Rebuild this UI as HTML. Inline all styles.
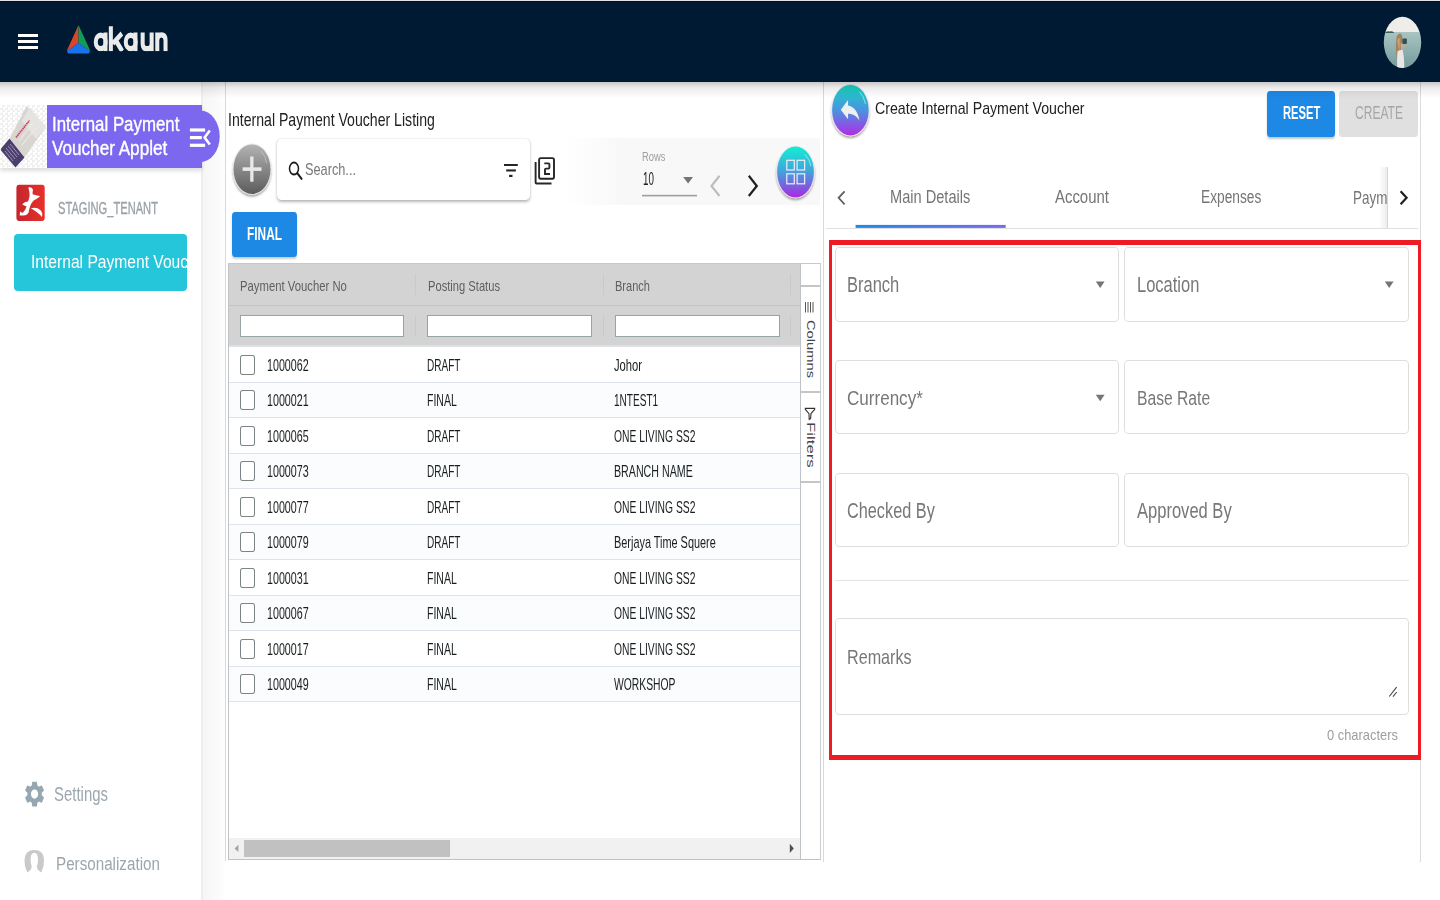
<!DOCTYPE html>
<html><head><meta charset="utf-8">
<style>
html,body{margin:0;padding:0;width:1440px;height:900px;overflow:hidden;background:#fff;}
body{position:relative;font-family:"Liberation Sans",sans-serif;}
.a{position:absolute;box-sizing:border-box;}
.t{position:absolute;white-space:nowrap;line-height:1;transform-origin:0 0;font-family:"Liberation Sans",sans-serif;}
svg{position:absolute;overflow:visible;}
</style></head><body>
<!-- ============ NAVBAR ============ -->
<div class="a" style="left:0;top:0;width:1440px;height:1px;background:#e3e2de"></div>
<div class="a" style="left:0;top:1px;width:1440px;height:81px;background:#001a33"></div>
<div class="a" style="left:0;top:1px;width:1440px;height:1px;background:#000d24"></div>
<!-- hamburger -->
<div class="a" style="left:18.4px;top:34px;width:19.4px;height:3px;background:#fff"></div>
<div class="a" style="left:18.4px;top:40px;width:19.4px;height:3px;background:#fff"></div>
<div class="a" style="left:18.4px;top:46.2px;width:19.4px;height:3px;background:#fff"></div>
<svg style="left:0;top:0" width="1440" height="82" viewBox="0 0 1440 82">
  <path d="M78.5 25 L67 50.2 Q66.6 51.2 67.6 50.7 L78.5 43 Z" fill="#d8452b"/>
  <path d="M78.5 25 L90 50.2 Q90.4 51.2 89.4 50.7 L78.5 43 Z" fill="#0f9d58"/>
  <path d="M78.5 43 L67.4 50.8 Q66.8 53.4 69 53.5 L88 53.5 Q90.2 53.4 89.6 50.8 Z" fill="#1a73e8"/>
  <clipPath id="lgc"><rect x="90" y="20" width="80" height="31.3"/></clipPath><g clip-path="url(#lgc)"><g transform="translate(93.75 0) scale(0.75 1)" fill="none" stroke="#ebebeb" stroke-width="5.4">
    <ellipse cx="9.3" cy="41.9" rx="6.6" ry="6.7"/>
    <path d="M15.6 32.5 V51.25"/>
    <path d="M22.8 26.25 V51.25 M37.5 33.5 L25.5 43.5 M29.5 40.5 L38 51.25"/>
    <ellipse cx="49.3" cy="41.9" rx="6.6" ry="6.7"/>
    <path d="M55.6 32.5 V51.25"/>
    <path d="M65.2 32.5 V43.5 Q65.2 48.8 71.2 48.8 Q77.2 48.8 77.2 43.5 V32.5 M77.2 42 V51.25"/>
    <path d="M84.7 51.25 V40.2 Q84.7 34.9 90.2 34.9 Q95.7 34.9 95.7 40.2 V51.25 M84.7 41 V32.5"/>
  </g></g>
  <defs><clipPath id="avc"><ellipse cx="1402.5" cy="42.4" rx="18.7" ry="25.6"/></clipPath>
  <linearGradient id="sea" x1="0" y1="0" x2="0" y2="1"><stop offset="0" stop-color="#a9c4c3"/><stop offset="1" stop-color="#6f9796"/></linearGradient></defs>
  <g clip-path="url(#avc)">
    <rect x="1380" y="14" width="45" height="18.5" fill="#eeede9"/>
    <rect x="1380" y="32" width="45" height="40" fill="url(#sea)"/>
    <path d="M1384 33 Q1387 30.5 1390 31.5 Q1392 30.8 1394 32.5 L1394 33 Z" fill="#3d5a55"/>
    <path d="M1396.5 58 Q1395.3 46 1396.5 37.5 Q1398 33 1400.5 33.5 Q1402.5 34.5 1402.3 39 Q1401.5 48 1400.5 58 Z" fill="#a3825f"/>
    <path d="M1397.2 41 Q1398.5 36 1399.8 39 L1399.5 52 Z" fill="#c7a27a"/>
    <path d="M1397.5 51 L1402.5 49.5 Q1404.5 58 1404.3 70 L1397.3 70 Q1396.8 60 1397.5 51 Z" fill="#e9e7e3"/>
    <path d="M1400.5 44 L1404 41 L1404.5 47 L1401 50 Z" fill="#c9a88c"/>
    <rect x="1402.3" y="38.5" width="4.6" height="5.5" rx="1" fill="#37504f"/>
  </g>
</svg>

<!-- ============ SIDEBAR ============ -->
<div class="a" style="left:201px;top:82px;width:2px;height:818px;background:#eeeeee"></div>
<div class="a" style="left:203px;top:82px;width:22px;height:818px;background:linear-gradient(90deg,#f6f6f6,#fafafa 60%,#fefefe)"></div>
<!-- applet header -->
<div class="a" style="left:0;top:105px;width:202px;height:63px;box-shadow:0 3px 4px rgba(0,0,0,0.13)"></div>
<div class="a" style="left:0;top:105px;width:47px;height:63px;background:conic-gradient(#f0f0f0 25%,#fff 0 50%,#f0f0f0 0 75%,#fff 0) 0 0/5px 5px"></div>
<svg style="left:0;top:0" width="230" height="175" viewBox="0 0 230 175">
  <path d="M26.5 106 L46 126.5 L24.5 157.5 L9.5 138.5 Z" fill="#d9d6d2"/>
  <path d="M29.5 107.5 L46 126.5 L36 139 L22 121 Z" fill="#e6e4e1"/>
  <path d="M9.5 138.5 L24.5 157.5 L15.5 167.5 L1 150.5 Q0.5 149 1.5 148 Z" fill="#4b3d6e"/>
  <path d="M6 148 L15 159 M8 146 L17 157 M10 144 L19 155 M5 151 L13 161" stroke="#a59fb8" stroke-width="0.9"/>
  <path d="M16 137.5 L29.5 120.5" stroke="#c9435f" stroke-width="1.7" stroke-dasharray="1.6 0.5"/>
  <path d="M19 141 L33 123 M22 145 L36 128" stroke="#f1f0ee" stroke-width="1"/>
  <rect x="47" y="105" width="155" height="63" fill="#7b68ee"/>
  <ellipse cx="200.5" cy="136.3" rx="19.2" ry="25.7" fill="#7b68ee"/>
  <rect x="189.9" y="128.4" width="15.2" height="3.2" fill="#fff"/>
  <rect x="189.9" y="136" width="11.9" height="3.2" fill="#fff"/>
  <rect x="189.9" y="143.7" width="15.2" height="3.2" fill="#fff"/>
  <path d="M209.8 130.4 L204.6 137.5 L209.8 144.6" fill="none" stroke="#fff" stroke-width="2.6"/>
</svg>
<!-- tenant logo -->
<svg style="left:0;top:0" width="60" height="230" viewBox="0 0 60 230">
  <defs><linearGradient id="tg" x1="0" y1="0" x2="1" y2="0"><stop offset="0" stop-color="#c4262e"/><stop offset="1" stop-color="#e8302a"/></linearGradient></defs>
  <rect x="16.4" y="184.8" width="28.3" height="36.2" rx="2.6" ry="3.4" fill="url(#tg)"/>
  <path d="M28.4 187.5 Q31.5 186.8 33 189.5 Q32.5 192 32.6 194.2 Q36 195 40.2 196.3 Q37 199 34 200.3 Q31.5 202.5 30.2 206 Q28.8 210.5 28.6 212.5 Q27 215.5 23.5 215.5 L19.8 215.4 Q19.5 212.5 20.6 211.3 Q21.3 213.2 22.8 212.8 Q25.5 210 26.6 206.5 Q24.2 205.8 22.2 204.3 Q24.5 201.8 28 201.6 Q29.2 199 29.6 195.5 Q29.8 192.5 28.4 187.5 Z" fill="#fff"/>
  <path d="M30.8 208.3 Q36.8 206.8 40.5 210.3 Q43.2 213.5 41.8 216.9 Q38 212.2 30.8 208.3 Z" fill="#fff"/>
</svg>
<!-- cyan applet button -->
<div class="a" style="left:14px;top:234px;width:173px;height:57px;background:#26c6da;border-radius:4px"></div>
<!-- settings gear -->
<svg style="left:0;top:0" width="60" height="900" viewBox="0 0 60 900">
  <g transform="translate(22.5 778.6) scale(1.005 1.29)">
    <path d="M19.14 12.94c.04-.3.06-.61.06-.94 0-.32-.02-.64-.07-.94l2.03-1.58c.18-.14.23-.41.12-.61l-1.92-3.32c-.12-.22-.37-.29-.59-.22l-2.39.96c-.5-.38-1.03-.7-1.62-.94l-.36-2.54c-.04-.24-.24-.41-.48-.41h-3.84c-.24 0-.43.17-.47.41l-.36 2.54c-.59.24-1.130.57-1.62.94l-2.39-.96c-.22-.08-.47 0-.59.22L2.74 8.87c-.12.21-.08.47.12.61l2.03 1.580c-.05.3-.09.63-.09.94s.02.64.07.94l-2.03 1.58c-.18.14-.23.41-.12.61l1.92 3.32c.12.22.37.29.59.22l2.39-.96c.5.38 1.03.7 1.62.94l.36 2.54c.05.24.24.41.48.41h3.84c.24 0 .44-.17.47-.41l.36-2.54c.59-.24 1.13-.56 1.62-.94l2.39.96c.22.08.47 0 .59-.22l1.92-3.32c.12-.22.07-.47-.12-.61l-2.01-1.58zM12 15.6c-1.98 0-3.6-1.62-3.6-3.6s1.62-3.6 3.6-3.6 3.6 1.62 3.6 3.6-1.62 3.6-3.6 3.6z" fill="#95a7b1"/>
  </g>
  <path d="M27.4 872.6 Q24.1 866 24.6 859 Q25.3 849.9 34.3 849.9 Q43.3 849.9 44 859 Q44.4 866 41.3 872.6 Q36.6 869.5 36.9 866.3 Q38.2 863 38 859 Q37.7 852.8 34.3 852.8 Q30.9 852.8 30.6 859 Q30.4 863 31.7 866.3 Q32 869.5 27.4 872.6 Z" fill="#c9c9c9"/>
</svg>

<!-- ============ LISTING PANEL ============ -->
<div class="a" style="left:225px;top:82px;width:1px;height:779px;background:#d9d9d9"></div>
<!-- plus FAB -->
<svg style="left:0;top:0" width="830" height="260" viewBox="0 0 830 260">
  <defs>
    <linearGradient id="pg" x1="0" y1="0" x2="0" y2="1"><stop offset="0" stop-color="#b3b3b3"/><stop offset="0.45" stop-color="#8c8c8c"/><stop offset="1" stop-color="#5c5c5c"/></linearGradient>
    <linearGradient id="fg" x1="0" y1="0" x2="0" y2="1"><stop offset="0" stop-color="#0ff0d2"/><stop offset="0.5" stop-color="#45a0dc"/><stop offset="1" stop-color="#aa28e4"/></linearGradient>
    <filter id="sh" x="-30%" y="-30%" width="160%" height="160%"><feGaussianBlur in="SourceAlpha" stdDeviation="1.3"/><feOffset dy="1.5"/><feComponentTransfer><feFuncA type="linear" slope="0.35"/></feComponentTransfer><feMerge><feMergeNode/><feMergeNode in="SourceGraphic"/></feMerge></filter>
  </defs>
  <ellipse cx="252" cy="169.2" rx="19.3" ry="25.6" fill="#ebe6ee" filter="url(#sh)"/><ellipse cx="252" cy="169.2" rx="18.5" ry="24.8" fill="url(#pg)"/>
  <path d="M261 151 Q266 156 266.5 163" stroke="#d0d0d0" stroke-width="0.8" fill="none" opacity="0.8"/>
  <rect x="242.6" y="167.3" width="18.9" height="3.6" fill="#e8e8e8"/>
  <rect x="250.2" y="156.5" width="3.3" height="25.2" fill="#e8e8e8"/>
</svg>
<!-- search box -->
<div class="a" style="left:277px;top:139px;width:253px;height:61px;background:#fff;border-radius:4px/5px;box-shadow:0 1.5px 3px rgba(0,0,0,0.28),0 0 1px rgba(0,0,0,0.12)"></div>
<svg style="left:0;top:0" width="830" height="260" viewBox="0 0 830 260">
  <g transform="translate(288 161.2) scale(0.75 1)">
    <circle cx="8" cy="7.4" r="6" fill="none" stroke="#1b1b1b" stroke-width="2"/>
    <path d="M12.3 12 L18.2 17.6" stroke="#1b1b1b" stroke-width="2.3" stroke-linecap="round"/>
  </g>
  <rect x="504" y="164" width="13.8" height="2" fill="#262626"/>
  <rect x="506.2" y="169.4" width="9.7" height="2.1" fill="#262626"/>
  <rect x="509.1" y="174.8" width="3.4" height="2.2" fill="#262626"/>
  <!-- filter_2 -->
  <rect x="539.1" y="158.1" width="14.9" height="20.6" rx="1.6" ry="2" fill="none" stroke="#262626" stroke-width="1.9"/>
  <path d="M535.6 162 L535.6 182.4 Q535.6 183.5 536.6 183.5 L551.5 183.5" fill="none" stroke="#262626" stroke-width="1.9"/>
  <path d="M544.3 163.4 H548.4 Q549.4 163.4 549.4 164.4 V167.6 Q549.4 168.6 548.4 168.6 H546 Q545 168.6 545 169.6 V174 H550" fill="none" stroke="#262626" stroke-width="1.9"/>
</svg>
<!-- paginator bg -->
<div class="a" style="left:566px;top:138px;width:254px;height:67px;background:linear-gradient(90deg,rgba(248,248,248,0),#f8f8f8 22%,#f8f8f8)"></div>
<svg style="left:0;top:0" width="830" height="260" viewBox="0 0 830 260">
  <rect x="642" y="194.8" width="55" height="1.6" fill="#9e9e9e"/>
  <path d="M683.2 177 L693 177 L688.1 183.4 Z" fill="#757575"/>
  <path d="M719.5 175.8 L711.5 186 L719.5 196" fill="none" stroke="#bdbdbd" stroke-width="2.2"/>
  <path d="M748.8 175.8 L756.8 186 L748.8 196" fill="none" stroke="#1f1f1f" stroke-width="2.2"/>
  <!-- grid FAB -->
  <ellipse cx="795.5" cy="172" rx="19.2" ry="26.2" fill="#ebe6ee" filter="url(#sh)"/><ellipse cx="795.5" cy="172" rx="18.4" ry="25.4" fill="url(#fg)"/>
  <path d="M804.7 154.5 Q809.5 158.5 811 166" stroke="#8ff0f0" stroke-width="1" fill="none" opacity="0.9"/>
  <g fill="none" stroke="#eceaf4" stroke-width="1.25">
    <rect x="786.8" y="160.3" width="7.5" height="9.7"/>
    <rect x="797.1" y="160.3" width="7.5" height="9.7"/>
    <rect x="786.8" y="173.8" width="7.5" height="10"/>
    <rect x="797.1" y="173.8" width="7.5" height="10"/>
  </g>
</svg>
<!-- FINAL button -->
<div class="a" style="left:232px;top:211.8px;width:65px;height:45.2px;background:#1e88e5;border-radius:3px/4px;box-shadow:0 2px 2px rgba(0,0,0,0.2)"></div>
<div class="a" style="left:228px;top:263px;width:572px;height:82px;background:#d3d3d3"></div>
<div class="a" style="left:228px;top:304.5px;width:572px;height:1px;background:#bfc5ca"></div>
<div class="a" style="left:228px;top:345px;width:572px;height:2px;background:#dfe2e5"></div>
<div class="a" style="left:415px;top:274px;width:1px;height:21px;background:#c9c9c9"></div>
<div class="a" style="left:415px;top:316px;width:1px;height:21px;background:#c9c9c9"></div>
<div class="a" style="left:603px;top:274px;width:1px;height:21px;background:#c9c9c9"></div>
<div class="a" style="left:603px;top:316px;width:1px;height:21px;background:#c9c9c9"></div>
<div class="a" style="left:790px;top:274px;width:1px;height:21px;background:#c9c9c9"></div>
<div class="a" style="left:790px;top:316px;width:1px;height:21px;background:#c9c9c9"></div>
<div class="a" style="left:240.3px;top:315.4px;width:164.2px;height:21.3px;background:#fff;border:1px solid #95a5a6"></div>
<div class="a" style="left:427px;top:315.4px;width:165.0px;height:21.3px;background:#fff;border:1px solid #95a5a6"></div>
<div class="a" style="left:615px;top:315.4px;width:164.7px;height:21.3px;background:#fff;border:1px solid #95a5a6"></div>
<div class="a" style="left:228px;top:347.0px;width:572px;height:35.5px;background:#fff;border-bottom:1px solid #dde2eb"></div>
<div class="a" style="left:240px;top:354.6px;width:15px;height:20px;background:#fff;border:1.3px solid #7d8486;border-radius:2.5px/3px"></div>
<div class="a" style="left:228px;top:382.5px;width:572px;height:35.5px;background:#fbfcfe;border-bottom:1px solid #dde2eb"></div>
<div class="a" style="left:240px;top:390.1px;width:15px;height:20px;background:#fff;border:1.3px solid #7d8486;border-radius:2.5px/3px"></div>
<div class="a" style="left:228px;top:418.0px;width:572px;height:35.5px;background:#fff;border-bottom:1px solid #dde2eb"></div>
<div class="a" style="left:240px;top:425.6px;width:15px;height:20px;background:#fff;border:1.3px solid #7d8486;border-radius:2.5px/3px"></div>
<div class="a" style="left:228px;top:453.5px;width:572px;height:35.5px;background:#fbfcfe;border-bottom:1px solid #dde2eb"></div>
<div class="a" style="left:240px;top:461.1px;width:15px;height:20px;background:#fff;border:1.3px solid #7d8486;border-radius:2.5px/3px"></div>
<div class="a" style="left:228px;top:489.0px;width:572px;height:35.5px;background:#fff;border-bottom:1px solid #dde2eb"></div>
<div class="a" style="left:240px;top:496.6px;width:15px;height:20px;background:#fff;border:1.3px solid #7d8486;border-radius:2.5px/3px"></div>
<div class="a" style="left:228px;top:524.5px;width:572px;height:35.5px;background:#fbfcfe;border-bottom:1px solid #dde2eb"></div>
<div class="a" style="left:240px;top:532.1px;width:15px;height:20px;background:#fff;border:1.3px solid #7d8486;border-radius:2.5px/3px"></div>
<div class="a" style="left:228px;top:560.0px;width:572px;height:35.5px;background:#fff;border-bottom:1px solid #dde2eb"></div>
<div class="a" style="left:240px;top:567.6px;width:15px;height:20px;background:#fff;border:1.3px solid #7d8486;border-radius:2.5px/3px"></div>
<div class="a" style="left:228px;top:595.5px;width:572px;height:35.5px;background:#fbfcfe;border-bottom:1px solid #dde2eb"></div>
<div class="a" style="left:240px;top:603.1px;width:15px;height:20px;background:#fff;border:1.3px solid #7d8486;border-radius:2.5px/3px"></div>
<div class="a" style="left:228px;top:631.0px;width:572px;height:35.5px;background:#fff;border-bottom:1px solid #dde2eb"></div>
<div class="a" style="left:240px;top:638.6px;width:15px;height:20px;background:#fff;border:1.3px solid #7d8486;border-radius:2.5px/3px"></div>
<div class="a" style="left:228px;top:666.5px;width:572px;height:35.5px;background:#fbfcfe;border-bottom:1px solid #dde2eb"></div>
<div class="a" style="left:240px;top:674.1px;width:15px;height:20px;background:#fff;border:1.3px solid #7d8486;border-radius:2.5px/3px"></div>
<div class="a" style="left:228px;top:263px;width:1px;height:597px;background:#bdc3c7"></div>
<div class="a" style="left:799.5px;top:263px;width:1px;height:597px;background:#bdc3c7"></div>
<div class="a" style="left:228px;top:859px;width:593px;height:1px;background:#bdc3c7"></div>
<div class="a" style="left:228px;top:263px;width:592px;height:1px;background:#c8c8c8"></div>
<div class="a" style="left:820px;top:263px;width:1px;height:597px;background:#c8cdd1"></div>
<div class="a" style="left:229px;top:838px;width:571px;height:21px;background:#f1f1f1"></div>
<div class="a" style="left:244px;top:840px;width:206px;height:17px;background:#c1c1c1"></div>
<svg style="left:0;top:0" width="830" height="900" viewBox="0 0 830 900"><path d="M238.4 844.8 L234.6 848.4 L238.4 852 Z" fill="#a3a3a3"/><path d="M789.8 843.8 L793.8 848.4 L789.8 853 Z" fill="#505050"/></svg>
<div class="a" style="left:801px;top:285px;width:19px;height:1.5px;background:#c5c5c5"></div>
<div class="a" style="left:801px;top:391px;width:19px;height:1.5px;background:#c5c5c5"></div>
<div class="a" style="left:801px;top:481px;width:19px;height:1.5px;background:#c5c5c5"></div>
<svg style="left:0;top:0" width="830" height="900" viewBox="0 0 830 900"><g stroke="#555" stroke-width="1"><path d="M805.5 302 V312.5 M808 302 V312.5 M810.5 302 V312.5 M813 302 V312.5"/></g><path d="M805.3 408.4 L814.7 408.4 Q815 409.3 814.2 410 L811 413.6 L810.6 418.6 L809.2 419.3 L809 413.6 L805.8 410 Q805 409.3 805.3 408.4 Z" fill="none" stroke="#333" stroke-width="1.1"/></svg>
<div class="t" style="left:815.6px;top:319.5px;font-size:14px;color:#444;transform:scaleX(0.75) rotate(90deg) scaleX(1.05)">Columns</div>
<div class="t" style="left:815.6px;top:421.5px;font-size:14px;color:#444;transform:scaleX(0.75) rotate(90deg) scaleX(1.2)">Filters</div>

<!-- ============ RIGHT PANEL ============ -->
<div class="a" style="left:823px;top:82px;width:1px;height:780px;background:#d9d9d9"></div>
<div class="a" style="left:1420px;top:82px;width:1px;height:780px;background:#dcdcdc"></div>
<svg style="left:0;top:0" width="1440" height="900" viewBox="0 0 1440 900">
  <defs>
    <linearGradient id="bg2" x1="0" y1="0" x2="0" y2="1"><stop offset="0" stop-color="#14d8c0"/><stop offset="0.5" stop-color="#4a93e0"/><stop offset="1" stop-color="#b22ce6"/></linearGradient>
    <filter id="sh2" x="-30%" y="-30%" width="160%" height="160%"><feGaussianBlur in="SourceAlpha" stdDeviation="1.3"/><feOffset dy="1.5"/><feComponentTransfer><feFuncA type="linear" slope="0.35"/></feComponentTransfer><feMerge><feMergeNode/><feMergeNode in="SourceGraphic"/></feMerge></filter>
    <linearGradient id="ul" x1="0" y1="0" x2="1" y2="0"><stop offset="0" stop-color="#1e88e5"/><stop offset="1" stop-color="#7b68ee"/></linearGradient>
  </defs>
  <ellipse cx="850.4" cy="110.2" rx="19.1" ry="26.1" fill="#ebe6ee" filter="url(#sh2)"/><ellipse cx="850.4" cy="110.2" rx="18.3" ry="25.3" fill="url(#bg2)"/>
  <path d="M859.5 92 Q864 96 865.5 104" stroke="#a8f4f0" stroke-width="0.9" fill="none" opacity="0.8"/>
  <g transform="translate(837.7 93.1) scale(1.035 1.38)">
    <path d="M10 9V5l-7 7 7 7v-4.1c5 0 8.5 1.6 11 5.1-1-5-4-10-11-11z" fill="#efefef"/>
  </g>
  <!-- tab chevrons -->
  <path d="M844.6 191.3 L838.6 197.8 L844.6 204.3" fill="none" stroke="#616161" stroke-width="1.8"/>
  <path d="M1400.6 191.3 L1406.6 197.8 L1400.6 204.3" fill="none" stroke="#1f1f1f" stroke-width="2.2"/>
  <rect x="855.6" y="224.9" width="150.1" height="3" fill="url(#ul)"/>
  <!-- dropdown arrows -->
  <path d="M1095.8 281.5 L1104.6 281.5 L1100.2 288 Z" fill="#757575"/>
  <path d="M1384.8 281.5 L1393.6 281.5 L1389.2 288 Z" fill="#757575"/>
  <path d="M1095.8 394.8 L1104.6 394.8 L1100.2 401.3 Z" fill="#757575"/>
  <!-- resize handle -->
  <path d="M1389.3 696.5 L1396.6 687.2 M1393 696.7 L1396.7 692" stroke="#444" stroke-width="1.1"/>
</svg>
<!-- buttons -->
<div class="a" style="left:1267.3px;top:90.8px;width:67.7px;height:46px;background:#1e88e5;border-radius:3px/4px;box-shadow:0 2px 2px rgba(0,0,0,0.22)"></div>
<div class="a" style="left:1339.3px;top:90.8px;width:79px;height:46px;background:#e0e0e0;border-radius:3px/4px"></div>
<!-- tab bar -->
<div class="a" style="left:826px;top:228px;width:592px;height:1px;background:#e0e0e0"></div>
<div class="a" style="left:1379px;top:166.5px;width:8px;height:61.5px;background:linear-gradient(90deg,rgba(0,0,0,0),rgba(0,0,0,0.07))"></div>
<div class="a" style="left:1387px;top:166.5px;width:1px;height:61.5px;background:#d6d6d6"></div>
<!-- red box -->
<div class="a" style="left:828.8px;top:240.2px;width:591.8px;height:519.4px;border-style:solid;border-color:#ed1c24;border-width:5px 3.8px"></div>
<!-- fields -->
<div class="a" style="left:835.3px;top:247.2px;width:284.2px;height:74.5px;border:1px solid #dedede;border-radius:4px/5px"></div>
<div class="a" style="left:1124.2px;top:247.2px;width:284.4px;height:74.5px;border:1px solid #dedede;border-radius:4px/5px"></div>
<div class="a" style="left:835.3px;top:360px;width:284.2px;height:74.3px;border:1px solid #dedede;border-radius:4px/5px"></div>
<div class="a" style="left:1124.2px;top:360px;width:284.4px;height:74.3px;border:1px solid #dedede;border-radius:4px/5px"></div>
<div class="a" style="left:835.3px;top:472.5px;width:284.2px;height:74.3px;border:1px solid #dedede;border-radius:4px/5px"></div>
<div class="a" style="left:1124.2px;top:472.5px;width:284.4px;height:74.3px;border:1px solid #dedede;border-radius:4px/5px"></div>
<div class="a" style="left:835.3px;top:579.5px;width:573.3px;height:1.8px;background:#e3e3e3"></div>
<div class="a" style="left:835.3px;top:618.3px;width:573.3px;height:97px;border:1px solid #dedede;border-radius:4px/5px"></div>

<div class="t" style="left:51.50px;top:113.93px;font-size:20.78px;transform:scaleX(0.8114);color:#fff;-webkit-text-stroke:0.4px #fff;">Internal Payment</div>
<div class="t" style="left:51.50px;top:138.33px;font-size:20.78px;transform:scaleX(0.8252);color:#fff;-webkit-text-stroke:0.4px #fff;">Voucher Applet</div>
<div class="t" style="left:57.60px;top:201.39px;font-size:16.72px;transform:scaleX(0.6661);color:#9ba1a6;-webkit-text-stroke:0.35px #9ba1a6;">STAGING_TENANT</div>
<div style="position:absolute;left:14px;top:234px;width:173px;height:57px;overflow:hidden"><div class="t" style="left:17.25px;top:19.04px;font-size:18.90px;transform:scaleX(0.8264);color:#fff;">Internal Payment Voucher Applet</div></div>
<div class="t" style="left:54.00px;top:783.95px;font-size:20.06px;transform:scaleX(0.7451);color:#9ba6ad;">Settings</div>
<div class="t" style="left:55.50px;top:853.69px;font-size:19.19px;transform:scaleX(0.7921);color:#9ba6ad;">Personalization</div>
<div class="t" style="left:228.00px;top:112.33px;font-size:17.73px;transform:scaleX(0.7955);color:#212121;">Internal Payment Voucher Listing</div>
<div class="t" style="left:305.00px;top:160.82px;font-size:17.15px;transform:scaleX(0.7430);color:#777;">Search...</div>
<div class="t" style="left:247.00px;top:224.56px;font-size:18.17px;transform:scaleX(0.6543);color:#fff;font-weight:bold;">FINAL</div>
<div class="t" style="left:240.30px;top:277.58px;font-size:15.55px;transform:scaleX(0.7274);color:#5f5f5f;">Payment Voucher No</div>
<div class="t" style="left:427.50px;top:277.58px;font-size:15.55px;transform:scaleX(0.7180);color:#5f5f5f;">Posting Status</div>
<div class="t" style="left:615.00px;top:277.58px;font-size:15.55px;transform:scaleX(0.7104);color:#5f5f5f;">Branch</div>
<div class="t" style="left:642.00px;top:150.50px;font-size:12.35px;transform:scaleX(0.7573);color:#9e9e9e;">Rows</div>
<div class="t" style="left:642.50px;top:171.40px;font-size:17.88px;transform:scaleX(0.5483);color:#212121;">10</div>
<div class="t" style="left:874.90px;top:99.75px;font-size:17.01px;transform:scaleX(0.8336);color:#212121;">Create Internal Payment Voucher</div>
<div class="t" style="left:1282.50px;top:104.28px;font-size:18.02px;transform:scaleX(0.6207);color:#fff;font-weight:bold;">RESET</div>
<div class="t" style="left:1355.00px;top:104.28px;font-size:18.02px;transform:scaleX(0.6688);color:#a6a6a6;">CREATE</div>
<div class="t" style="left:890.40px;top:189.17px;font-size:17.44px;transform:scaleX(0.8368);color:#757575;">Main Details</div>
<div class="t" style="left:1054.60px;top:189.17px;font-size:17.44px;transform:scaleX(0.8553);color:#757575;">Account</div>
<div class="t" style="left:1201.00px;top:189.17px;font-size:17.44px;transform:scaleX(0.7872);color:#757575;">Expenses</div>
<div style="position:absolute;left:1340px;top:170px;width:47px;height:58px;overflow:hidden"><div class="t" style="left:12.90px;top:19.67px;font-size:17.44px;transform:scaleX(0.7714);color:#757575;">Payments</div></div>
<div class="t" style="left:846.75px;top:274.47px;font-size:21.80px;transform:scaleX(0.7565);color:#777;">Branch</div>
<div class="t" style="left:1136.50px;top:274.47px;font-size:21.80px;transform:scaleX(0.7570);color:#777;">Location</div>
<div class="t" style="left:846.70px;top:387.09px;font-size:21.08px;transform:scaleX(0.8089);color:#777;">Currency*</div>
<div class="t" style="left:1136.50px;top:387.09px;font-size:21.08px;transform:scaleX(0.7429);color:#777;">Base Rate</div>
<div class="t" style="left:846.70px;top:500.84px;font-size:21.37px;transform:scaleX(0.7621);color:#777;">Checked By</div>
<div class="t" style="left:1136.50px;top:500.84px;font-size:21.37px;transform:scaleX(0.7741);color:#777;">Approved By</div>
<div class="t" style="left:846.70px;top:646.81px;font-size:20.93px;transform:scaleX(0.7714);color:#777;">Remarks</div>
<div class="t" style="left:1326.50px;top:727.18px;font-size:15.55px;transform:scaleX(0.8286);color:#9e9e9e;">0 characters</div>
<div class="t" style="left:266.60px;top:358.12px;font-size:16.57px;transform:scaleX(0.6465);color:#181d1f;">1000062</div>
<div class="t" style="left:427.10px;top:358.12px;font-size:16.57px;transform:scaleX(0.6048);color:#181d1f;">DRAFT</div>
<div class="t" style="left:614.30px;top:358.12px;font-size:16.57px;transform:scaleX(0.6781);color:#181d1f;">Johor</div>
<div class="t" style="left:266.60px;top:393.12px;font-size:16.57px;transform:scaleX(0.6465);color:#181d1f;">1000021</div>
<div class="t" style="left:427.10px;top:393.12px;font-size:16.57px;transform:scaleX(0.6367);color:#181d1f;">FINAL</div>
<div class="t" style="left:614.30px;top:393.12px;font-size:16.57px;transform:scaleX(0.6076);color:#181d1f;">1NTEST1</div>
<div class="t" style="left:266.60px;top:429.12px;font-size:16.57px;transform:scaleX(0.6465);color:#181d1f;">1000065</div>
<div class="t" style="left:427.10px;top:429.12px;font-size:16.57px;transform:scaleX(0.6048);color:#181d1f;">DRAFT</div>
<div class="t" style="left:614.30px;top:429.12px;font-size:16.57px;transform:scaleX(0.6225);color:#181d1f;">ONE LIVING SS2</div>
<div class="t" style="left:266.60px;top:464.12px;font-size:16.57px;transform:scaleX(0.6465);color:#181d1f;">1000073</div>
<div class="t" style="left:427.10px;top:464.12px;font-size:16.57px;transform:scaleX(0.6048);color:#181d1f;">DRAFT</div>
<div class="t" style="left:614.30px;top:464.12px;font-size:16.57px;transform:scaleX(0.6435);color:#181d1f;">BRANCH NAME</div>
<div class="t" style="left:266.60px;top:500.12px;font-size:16.57px;transform:scaleX(0.6465);color:#181d1f;">1000077</div>
<div class="t" style="left:427.10px;top:500.12px;font-size:16.57px;transform:scaleX(0.6048);color:#181d1f;">DRAFT</div>
<div class="t" style="left:614.30px;top:500.12px;font-size:16.57px;transform:scaleX(0.6225);color:#181d1f;">ONE LIVING SS2</div>
<div class="t" style="left:266.60px;top:535.12px;font-size:16.57px;transform:scaleX(0.6465);color:#181d1f;">1000079</div>
<div class="t" style="left:427.10px;top:535.12px;font-size:16.57px;transform:scaleX(0.6048);color:#181d1f;">DRAFT</div>
<div class="t" style="left:614.30px;top:535.12px;font-size:16.57px;transform:scaleX(0.6579);color:#181d1f;">Berjaya Time Squere</div>
<div class="t" style="left:266.60px;top:571.12px;font-size:16.57px;transform:scaleX(0.6465);color:#181d1f;">1000031</div>
<div class="t" style="left:427.10px;top:571.12px;font-size:16.57px;transform:scaleX(0.6367);color:#181d1f;">FINAL</div>
<div class="t" style="left:614.30px;top:571.12px;font-size:16.57px;transform:scaleX(0.6225);color:#181d1f;">ONE LIVING SS2</div>
<div class="t" style="left:266.60px;top:606.12px;font-size:16.57px;transform:scaleX(0.6465);color:#181d1f;">1000067</div>
<div class="t" style="left:427.10px;top:606.12px;font-size:16.57px;transform:scaleX(0.6367);color:#181d1f;">FINAL</div>
<div class="t" style="left:614.30px;top:606.12px;font-size:16.57px;transform:scaleX(0.6225);color:#181d1f;">ONE LIVING SS2</div>
<div class="t" style="left:266.60px;top:642.12px;font-size:16.57px;transform:scaleX(0.6465);color:#181d1f;">1000017</div>
<div class="t" style="left:427.10px;top:642.12px;font-size:16.57px;transform:scaleX(0.6367);color:#181d1f;">FINAL</div>
<div class="t" style="left:614.30px;top:642.12px;font-size:16.57px;transform:scaleX(0.6225);color:#181d1f;">ONE LIVING SS2</div>
<div class="t" style="left:266.60px;top:677.12px;font-size:16.57px;transform:scaleX(0.6465);color:#181d1f;">1000049</div>
<div class="t" style="left:427.10px;top:677.12px;font-size:16.57px;transform:scaleX(0.6367);color:#181d1f;">FINAL</div>
<div class="t" style="left:614.30px;top:677.12px;font-size:16.57px;transform:scaleX(0.6243);color:#181d1f;">WORKSHOP</div>
<!-- navbar shadow -->
<div class="a" style="left:0;top:82px;width:1440px;height:16px;background:linear-gradient(180deg,rgba(0,0,0,0.22),rgba(0,0,0,0.08) 35%,rgba(0,0,0,0))"></div>
</body></html>
